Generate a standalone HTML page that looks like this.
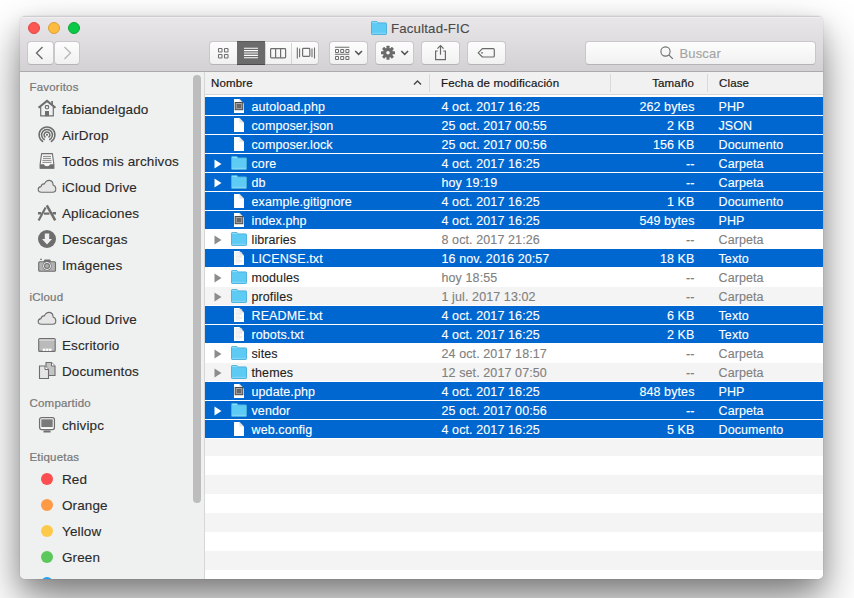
<!DOCTYPE html>
<html><head><meta charset="utf-8"><style>
html,body{margin:0;padding:0;}
body{width:854px;height:598px;overflow:hidden;background:#fff;position:relative;font-family:"Liberation Sans", sans-serif;}
.t{position:absolute;white-space:pre;font-family:"Liberation Sans", sans-serif;-webkit-text-stroke:0.12px currentColor;}
.ic{position:absolute;overflow:visible;}
.win{position:absolute;left:20px;top:16px;width:803px;height:563px;border-radius:5px;box-shadow:0 0 1px rgba(0,0,0,0.35),0 22px 45px rgba(0,0,0,0.45),0 8px 20px rgba(0,0,0,0.15);background:#fff;}
.clip{position:absolute;left:20px;top:16px;width:803px;height:563px;border-radius:5px;overflow:hidden;}
.toolbar{position:absolute;left:0;top:0;width:803px;height:55px;background:linear-gradient(#e9e7e9,#d3d1d3);border-bottom:1px solid #acaaac;box-shadow:inset 0 1px 0 #cfcdcf,inset 0 2px 0 rgba(255,255,255,0.35);}
.sidebar{position:absolute;left:0;top:56px;width:184px;height:507px;background:#eff0f0;border-right:1px solid #d6d6d6;}
.hdr{position:absolute;left:185px;top:56px;width:618px;height:22px;background:#f1f1f1;border-bottom:1px solid #d6d6d6;}
.row{position:absolute;left:205px;width:618px;}
.btn{position:absolute;box-sizing:border-box;background:linear-gradient(#fdfdfd,#f1f1f1);border:1px solid #c9c7c9;border-bottom-color:#b5b3b5;border-radius:4px;}
.seg{position:absolute;box-sizing:border-box;}
.tl{position:absolute;width:12px;height:12px;box-sizing:border-box;border-radius:50%;border:0.5px solid;}
.dot{position:absolute;width:12px;height:12px;border-radius:50%;}
.sb{position:absolute;left:193px;top:75px;width:8px;height:428px;border-radius:4px;background:#bdbdbd;}
</style></head><body>
<div class="win"></div>
<div class="clip">
 <div class="toolbar"></div>
 <div class="sidebar"></div>
 <div class="hdr"></div>
</div>
<div style="position:absolute;left:0;top:0;width:854px;height:598px;clip-path:inset(16px 31px 19px 20px round 5px);">
<div class="list">
<div class="row" style="top:97px;height:18px;background:#0067d0"></div>
<div class="row" style="top:116px;height:18px;background:#0067d0"></div>
<div class="row" style="top:135px;height:18px;background:#0067d0"></div>
<div class="row" style="top:154px;height:18px;background:#0067d0"></div>
<div class="row" style="top:173px;height:18px;background:#0067d0"></div>
<div class="row" style="top:192px;height:18px;background:#0067d0"></div>
<div class="row" style="top:211px;height:18px;background:#0067d0"></div>
<div class="row" style="top:230px;height:18px;background:#fff"></div>
<div class="row" style="top:249px;height:18px;background:#0067d0"></div>
<div class="row" style="top:268px;height:18px;background:#fff"></div>
<div class="row" style="top:287px;height:18px;background:#f4f4f4"></div>
<div class="row" style="top:306px;height:18px;background:#0067d0"></div>
<div class="row" style="top:325px;height:18px;background:#0067d0"></div>
<div class="row" style="top:344px;height:18px;background:#fff"></div>
<div class="row" style="top:363px;height:18px;background:#f4f4f4"></div>
<div class="row" style="top:382px;height:18px;background:#0067d0"></div>
<div class="row" style="top:401px;height:18px;background:#0067d0"></div>
<div class="row" style="top:420px;height:18px;background:#0067d0"></div>
<div class="row" style="top:439px;height:17px;background:#f4f4f4"></div>
<div class="row" style="top:456px;height:19px;background:#fff"></div>
<div class="row" style="top:475px;height:19px;background:#f4f4f4"></div>
<div class="row" style="top:494px;height:19px;background:#fff"></div>
<div class="row" style="top:513px;height:19px;background:#f4f4f4"></div>
<div class="row" style="top:532px;height:19px;background:#fff"></div>
<div class="row" style="top:551px;height:19px;background:#f4f4f4"></div>
<div class="row" style="top:570px;height:19px;background:#fff"></div>
</div>
<svg class="ic" style="left:234px;top:99px" width="10" height="14" viewBox="0 0 10 14"><path d="M0 0 H5.3 L10 4.7 V14 H0 Z" fill="#fff"/><path d="M5.3 0 V4.7 H10 Z" fill="#e9e9e9"/><path d="M5.3 0 L10 4.7" stroke="#c4c4c4" stroke-width="0.6"/><rect x="1.2" y="3.5" width="7.6" height="7.2" fill="#a8a8a8" stroke="#484848" stroke-width="1"/><rect x="2.7" y="5" width="4.6" height="4.3" fill="#666"/></svg>
<div class="t" style="left:251.5px;top:101.22px;font-size:12.5px;line-height:12.5px;color:#fff;font-weight:normal;letter-spacing:0.1px;">autoload.php</div>
<div class="t" style="left:441.5px;top:101.22px;font-size:12.5px;line-height:12.5px;color:#fff;font-weight:normal;letter-spacing:0.1px;">4 oct. 2017 16:25</div>
<div class="t" style="right:159.5px;top:101.22px;font-size:12.5px;line-height:12.5px;color:#fff;font-weight:normal;letter-spacing:0.1px;">262 bytes</div>
<div class="t" style="left:718.5px;top:101.22px;font-size:12.5px;line-height:12.5px;color:#fff;font-weight:normal;letter-spacing:0.1px;">PHP</div>
<svg class="ic" style="left:234px;top:118px" width="10" height="14" viewBox="0 0 10 14"><path d="M0 0 H5.3 L10 4.7 V14 H0 Z" fill="#fff"/><path d="M5.3 0 V4.7 H10 Z" fill="#e9e9e9"/><path d="M5.3 0 L10 4.7" stroke="#c4c4c4" stroke-width="0.6"/></svg>
<div class="t" style="left:251.5px;top:120.22px;font-size:12.5px;line-height:12.5px;color:#fff;font-weight:normal;letter-spacing:0.1px;">composer.json</div>
<div class="t" style="left:441.5px;top:120.22px;font-size:12.5px;line-height:12.5px;color:#fff;font-weight:normal;letter-spacing:0.1px;">25 oct. 2017 00:55</div>
<div class="t" style="right:159.5px;top:120.22px;font-size:12.5px;line-height:12.5px;color:#fff;font-weight:normal;letter-spacing:0.1px;">2 KB</div>
<div class="t" style="left:718.5px;top:120.22px;font-size:12.5px;line-height:12.5px;color:#fff;font-weight:normal;letter-spacing:0.1px;">JSON</div>
<svg class="ic" style="left:234px;top:137px" width="10" height="14" viewBox="0 0 10 14"><path d="M0 0 H5.3 L10 4.7 V14 H0 Z" fill="#fff"/><path d="M5.3 0 V4.7 H10 Z" fill="#e9e9e9"/><path d="M5.3 0 L10 4.7" stroke="#c4c4c4" stroke-width="0.6"/></svg>
<div class="t" style="left:251.5px;top:139.22px;font-size:12.5px;line-height:12.5px;color:#fff;font-weight:normal;letter-spacing:0.1px;">composer.lock</div>
<div class="t" style="left:441.5px;top:139.22px;font-size:12.5px;line-height:12.5px;color:#fff;font-weight:normal;letter-spacing:0.1px;">25 oct. 2017 00:56</div>
<div class="t" style="right:159.5px;top:139.22px;font-size:12.5px;line-height:12.5px;color:#fff;font-weight:normal;letter-spacing:0.1px;">156 KB</div>
<div class="t" style="left:718.5px;top:139.22px;font-size:12.5px;line-height:12.5px;color:#fff;font-weight:normal;letter-spacing:0.1px;">Documento</div>
<svg class="ic" style="left:214px;top:159px" width="8" height="10" viewBox="0 0 8 10"><path d="M0.5 0.5 L7.5 5 L0.5 9.5 Z" fill="#fff"/></svg>
<svg class="ic" style="left:231px;top:156px" width="16" height="14" viewBox="0 0 16 14"><path d="M0.5 1.3 Q0.5 0.5 1.3 0.5 H6 L7.1 1.9 H14.8 Q15.5 1.9 15.5 2.6 V12.8 Q15.5 13.5 14.8 13.5 H1.2 Q0.5 13.5 0.5 12.8 Z" fill="#5ecbf4" stroke="#47afdd" stroke-width="0.9"/><line x1="1.3" x2="6" y1="1.4" y2="1.4" stroke="#a0e2f9" stroke-width="0.8"/><line x1="1.2" x2="14.8" y1="12.3" y2="12.3" stroke="#8fdaf7" stroke-width="0.9"/></svg>
<div class="t" style="left:251.5px;top:158.22px;font-size:12.5px;line-height:12.5px;color:#fff;font-weight:normal;letter-spacing:0.1px;">core</div>
<div class="t" style="left:441.5px;top:158.22px;font-size:12.5px;line-height:12.5px;color:#fff;font-weight:normal;letter-spacing:0.1px;">4 oct. 2017 16:25</div>
<div class="t" style="right:159.5px;top:158.22px;font-size:12.5px;line-height:12.5px;color:#fff;font-weight:normal;letter-spacing:0.1px;">--</div>
<div class="t" style="left:718.5px;top:158.22px;font-size:12.5px;line-height:12.5px;color:#fff;font-weight:normal;letter-spacing:0.1px;">Carpeta</div>
<svg class="ic" style="left:214px;top:178px" width="8" height="10" viewBox="0 0 8 10"><path d="M0.5 0.5 L7.5 5 L0.5 9.5 Z" fill="#fff"/></svg>
<svg class="ic" style="left:231px;top:175px" width="16" height="14" viewBox="0 0 16 14"><path d="M0.5 1.3 Q0.5 0.5 1.3 0.5 H6 L7.1 1.9 H14.8 Q15.5 1.9 15.5 2.6 V12.8 Q15.5 13.5 14.8 13.5 H1.2 Q0.5 13.5 0.5 12.8 Z" fill="#5ecbf4" stroke="#47afdd" stroke-width="0.9"/><line x1="1.3" x2="6" y1="1.4" y2="1.4" stroke="#a0e2f9" stroke-width="0.8"/><line x1="1.2" x2="14.8" y1="12.3" y2="12.3" stroke="#8fdaf7" stroke-width="0.9"/></svg>
<div class="t" style="left:251.5px;top:177.22px;font-size:12.5px;line-height:12.5px;color:#fff;font-weight:normal;letter-spacing:0.1px;">db</div>
<div class="t" style="left:441.5px;top:177.22px;font-size:12.5px;line-height:12.5px;color:#fff;font-weight:normal;letter-spacing:0.1px;">hoy 19:19</div>
<div class="t" style="right:159.5px;top:177.22px;font-size:12.5px;line-height:12.5px;color:#fff;font-weight:normal;letter-spacing:0.1px;">--</div>
<div class="t" style="left:718.5px;top:177.22px;font-size:12.5px;line-height:12.5px;color:#fff;font-weight:normal;letter-spacing:0.1px;">Carpeta</div>
<svg class="ic" style="left:234px;top:194px" width="10" height="14" viewBox="0 0 10 14"><path d="M0 0 H5.3 L10 4.7 V14 H0 Z" fill="#fff"/><path d="M5.3 0 V4.7 H10 Z" fill="#e9e9e9"/><path d="M5.3 0 L10 4.7" stroke="#c4c4c4" stroke-width="0.6"/></svg>
<div class="t" style="left:251.5px;top:196.22px;font-size:12.5px;line-height:12.5px;color:#fff;font-weight:normal;letter-spacing:0.1px;">example.gitignore</div>
<div class="t" style="left:441.5px;top:196.22px;font-size:12.5px;line-height:12.5px;color:#fff;font-weight:normal;letter-spacing:0.1px;">4 oct. 2017 16:25</div>
<div class="t" style="right:159.5px;top:196.22px;font-size:12.5px;line-height:12.5px;color:#fff;font-weight:normal;letter-spacing:0.1px;">1 KB</div>
<div class="t" style="left:718.5px;top:196.22px;font-size:12.5px;line-height:12.5px;color:#fff;font-weight:normal;letter-spacing:0.1px;">Documento</div>
<svg class="ic" style="left:234px;top:213px" width="10" height="14" viewBox="0 0 10 14"><path d="M0 0 H5.3 L10 4.7 V14 H0 Z" fill="#fff"/><path d="M5.3 0 V4.7 H10 Z" fill="#e9e9e9"/><path d="M5.3 0 L10 4.7" stroke="#c4c4c4" stroke-width="0.6"/><rect x="1.2" y="3.5" width="7.6" height="7.2" fill="#a8a8a8" stroke="#484848" stroke-width="1"/><rect x="2.7" y="5" width="4.6" height="4.3" fill="#666"/></svg>
<div class="t" style="left:251.5px;top:215.22px;font-size:12.5px;line-height:12.5px;color:#fff;font-weight:normal;letter-spacing:0.1px;">index.php</div>
<div class="t" style="left:441.5px;top:215.22px;font-size:12.5px;line-height:12.5px;color:#fff;font-weight:normal;letter-spacing:0.1px;">4 oct. 2017 16:25</div>
<div class="t" style="right:159.5px;top:215.22px;font-size:12.5px;line-height:12.5px;color:#fff;font-weight:normal;letter-spacing:0.1px;">549 bytes</div>
<div class="t" style="left:718.5px;top:215.22px;font-size:12.5px;line-height:12.5px;color:#fff;font-weight:normal;letter-spacing:0.1px;">PHP</div>
<svg class="ic" style="left:214px;top:235px" width="8" height="10" viewBox="0 0 8 10"><path d="M0.5 0.5 L7.5 5 L0.5 9.5 Z" fill="#8c8c8c"/></svg>
<svg class="ic" style="left:231px;top:232px" width="16" height="14" viewBox="0 0 16 14"><path d="M0.5 1.3 Q0.5 0.5 1.3 0.5 H6 L7.1 1.9 H14.8 Q15.5 1.9 15.5 2.6 V12.8 Q15.5 13.5 14.8 13.5 H1.2 Q0.5 13.5 0.5 12.8 Z" fill="#5ecbf4" stroke="#47afdd" stroke-width="0.9"/><line x1="1.3" x2="6" y1="1.4" y2="1.4" stroke="#a0e2f9" stroke-width="0.8"/><line x1="1.2" x2="14.8" y1="12.3" y2="12.3" stroke="#8fdaf7" stroke-width="0.9"/></svg>
<div class="t" style="left:251.5px;top:234.22px;font-size:12.5px;line-height:12.5px;color:#1e1e1e;font-weight:normal;letter-spacing:0.1px;">libraries</div>
<div class="t" style="left:441.5px;top:234.22px;font-size:12.5px;line-height:12.5px;color:#808080;font-weight:normal;letter-spacing:0.1px;">8 oct. 2017 21:26</div>
<div class="t" style="right:159.5px;top:234.22px;font-size:12.5px;line-height:12.5px;color:#808080;font-weight:normal;letter-spacing:0.1px;">--</div>
<div class="t" style="left:718.5px;top:234.22px;font-size:12.5px;line-height:12.5px;color:#808080;font-weight:normal;letter-spacing:0.1px;">Carpeta</div>
<svg class="ic" style="left:234px;top:251px" width="10" height="14" viewBox="0 0 10 14"><path d="M0 0 H5.3 L10 4.7 V14 H0 Z" fill="#fff"/><line x1="1.4" x2="8.2" y1="1.60" y2="1.60" stroke="#e3e3e3" stroke-width="0.7"/><line x1="1.4" x2="8.2" y1="2.90" y2="2.90" stroke="#e3e3e3" stroke-width="0.7"/><line x1="1.4" x2="6" y1="4.20" y2="4.20" stroke="#e3e3e3" stroke-width="0.7"/><line x1="1.4" x2="8.2" y1="5.50" y2="5.50" stroke="#e3e3e3" stroke-width="0.7"/><line x1="1.4" x2="8.2" y1="6.80" y2="6.80" stroke="#e3e3e3" stroke-width="0.7"/><line x1="1.4" x2="6" y1="8.10" y2="8.10" stroke="#e3e3e3" stroke-width="0.7"/><line x1="1.4" x2="8.2" y1="9.40" y2="9.40" stroke="#e3e3e3" stroke-width="0.7"/><line x1="1.4" x2="8.2" y1="10.70" y2="10.70" stroke="#e3e3e3" stroke-width="0.7"/><line x1="1.4" x2="6" y1="12.00" y2="12.00" stroke="#e3e3e3" stroke-width="0.7"/><path d="M5.3 0 V4.7 H10 Z" fill="#e9e9e9"/><path d="M5.3 0 L10 4.7" stroke="#c4c4c4" stroke-width="0.6"/></svg>
<div class="t" style="left:251.5px;top:253.22px;font-size:12.5px;line-height:12.5px;color:#fff;font-weight:normal;letter-spacing:0.1px;">LICENSE.txt</div>
<div class="t" style="left:441.5px;top:253.22px;font-size:12.5px;line-height:12.5px;color:#fff;font-weight:normal;letter-spacing:0.1px;">16 nov. 2016 20:57</div>
<div class="t" style="right:159.5px;top:253.22px;font-size:12.5px;line-height:12.5px;color:#fff;font-weight:normal;letter-spacing:0.1px;">18 KB</div>
<div class="t" style="left:718.5px;top:253.22px;font-size:12.5px;line-height:12.5px;color:#fff;font-weight:normal;letter-spacing:0.1px;">Texto</div>
<svg class="ic" style="left:214px;top:273px" width="8" height="10" viewBox="0 0 8 10"><path d="M0.5 0.5 L7.5 5 L0.5 9.5 Z" fill="#8c8c8c"/></svg>
<svg class="ic" style="left:231px;top:270px" width="16" height="14" viewBox="0 0 16 14"><path d="M0.5 1.3 Q0.5 0.5 1.3 0.5 H6 L7.1 1.9 H14.8 Q15.5 1.9 15.5 2.6 V12.8 Q15.5 13.5 14.8 13.5 H1.2 Q0.5 13.5 0.5 12.8 Z" fill="#5ecbf4" stroke="#47afdd" stroke-width="0.9"/><line x1="1.3" x2="6" y1="1.4" y2="1.4" stroke="#a0e2f9" stroke-width="0.8"/><line x1="1.2" x2="14.8" y1="12.3" y2="12.3" stroke="#8fdaf7" stroke-width="0.9"/></svg>
<div class="t" style="left:251.5px;top:272.22px;font-size:12.5px;line-height:12.5px;color:#1e1e1e;font-weight:normal;letter-spacing:0.1px;">modules</div>
<div class="t" style="left:441.5px;top:272.22px;font-size:12.5px;line-height:12.5px;color:#808080;font-weight:normal;letter-spacing:0.1px;">hoy 18:55</div>
<div class="t" style="right:159.5px;top:272.22px;font-size:12.5px;line-height:12.5px;color:#808080;font-weight:normal;letter-spacing:0.1px;">--</div>
<div class="t" style="left:718.5px;top:272.22px;font-size:12.5px;line-height:12.5px;color:#808080;font-weight:normal;letter-spacing:0.1px;">Carpeta</div>
<svg class="ic" style="left:214px;top:292px" width="8" height="10" viewBox="0 0 8 10"><path d="M0.5 0.5 L7.5 5 L0.5 9.5 Z" fill="#8c8c8c"/></svg>
<svg class="ic" style="left:231px;top:289px" width="16" height="14" viewBox="0 0 16 14"><path d="M0.5 1.3 Q0.5 0.5 1.3 0.5 H6 L7.1 1.9 H14.8 Q15.5 1.9 15.5 2.6 V12.8 Q15.5 13.5 14.8 13.5 H1.2 Q0.5 13.5 0.5 12.8 Z" fill="#5ecbf4" stroke="#47afdd" stroke-width="0.9"/><line x1="1.3" x2="6" y1="1.4" y2="1.4" stroke="#a0e2f9" stroke-width="0.8"/><line x1="1.2" x2="14.8" y1="12.3" y2="12.3" stroke="#8fdaf7" stroke-width="0.9"/></svg>
<div class="t" style="left:251.5px;top:291.22px;font-size:12.5px;line-height:12.5px;color:#1e1e1e;font-weight:normal;letter-spacing:0.1px;">profiles</div>
<div class="t" style="left:441.5px;top:291.22px;font-size:12.5px;line-height:12.5px;color:#808080;font-weight:normal;letter-spacing:0.1px;">1 jul. 2017 13:02</div>
<div class="t" style="right:159.5px;top:291.22px;font-size:12.5px;line-height:12.5px;color:#808080;font-weight:normal;letter-spacing:0.1px;">--</div>
<div class="t" style="left:718.5px;top:291.22px;font-size:12.5px;line-height:12.5px;color:#808080;font-weight:normal;letter-spacing:0.1px;">Carpeta</div>
<svg class="ic" style="left:234px;top:308px" width="10" height="14" viewBox="0 0 10 14"><path d="M0 0 H5.3 L10 4.7 V14 H0 Z" fill="#fff"/><line x1="1.4" x2="8.2" y1="1.60" y2="1.60" stroke="#e3e3e3" stroke-width="0.7"/><line x1="1.4" x2="8.2" y1="2.90" y2="2.90" stroke="#e3e3e3" stroke-width="0.7"/><line x1="1.4" x2="6" y1="4.20" y2="4.20" stroke="#e3e3e3" stroke-width="0.7"/><line x1="1.4" x2="8.2" y1="5.50" y2="5.50" stroke="#e3e3e3" stroke-width="0.7"/><line x1="1.4" x2="8.2" y1="6.80" y2="6.80" stroke="#e3e3e3" stroke-width="0.7"/><line x1="1.4" x2="6" y1="8.10" y2="8.10" stroke="#e3e3e3" stroke-width="0.7"/><line x1="1.4" x2="8.2" y1="9.40" y2="9.40" stroke="#e3e3e3" stroke-width="0.7"/><line x1="1.4" x2="8.2" y1="10.70" y2="10.70" stroke="#e3e3e3" stroke-width="0.7"/><line x1="1.4" x2="6" y1="12.00" y2="12.00" stroke="#e3e3e3" stroke-width="0.7"/><path d="M5.3 0 V4.7 H10 Z" fill="#e9e9e9"/><path d="M5.3 0 L10 4.7" stroke="#c4c4c4" stroke-width="0.6"/></svg>
<div class="t" style="left:251.5px;top:310.22px;font-size:12.5px;line-height:12.5px;color:#fff;font-weight:normal;letter-spacing:0.1px;">README.txt</div>
<div class="t" style="left:441.5px;top:310.22px;font-size:12.5px;line-height:12.5px;color:#fff;font-weight:normal;letter-spacing:0.1px;">4 oct. 2017 16:25</div>
<div class="t" style="right:159.5px;top:310.22px;font-size:12.5px;line-height:12.5px;color:#fff;font-weight:normal;letter-spacing:0.1px;">6 KB</div>
<div class="t" style="left:718.5px;top:310.22px;font-size:12.5px;line-height:12.5px;color:#fff;font-weight:normal;letter-spacing:0.1px;">Texto</div>
<svg class="ic" style="left:234px;top:327px" width="10" height="14" viewBox="0 0 10 14"><path d="M0 0 H5.3 L10 4.7 V14 H0 Z" fill="#fff"/><line x1="1.4" x2="8.2" y1="1.60" y2="1.60" stroke="#e3e3e3" stroke-width="0.7"/><line x1="1.4" x2="8.2" y1="2.90" y2="2.90" stroke="#e3e3e3" stroke-width="0.7"/><line x1="1.4" x2="6" y1="4.20" y2="4.20" stroke="#e3e3e3" stroke-width="0.7"/><line x1="1.4" x2="8.2" y1="5.50" y2="5.50" stroke="#e3e3e3" stroke-width="0.7"/><line x1="1.4" x2="8.2" y1="6.80" y2="6.80" stroke="#e3e3e3" stroke-width="0.7"/><line x1="1.4" x2="6" y1="8.10" y2="8.10" stroke="#e3e3e3" stroke-width="0.7"/><line x1="1.4" x2="8.2" y1="9.40" y2="9.40" stroke="#e3e3e3" stroke-width="0.7"/><line x1="1.4" x2="8.2" y1="10.70" y2="10.70" stroke="#e3e3e3" stroke-width="0.7"/><line x1="1.4" x2="6" y1="12.00" y2="12.00" stroke="#e3e3e3" stroke-width="0.7"/><path d="M5.3 0 V4.7 H10 Z" fill="#e9e9e9"/><path d="M5.3 0 L10 4.7" stroke="#c4c4c4" stroke-width="0.6"/></svg>
<div class="t" style="left:251.5px;top:329.22px;font-size:12.5px;line-height:12.5px;color:#fff;font-weight:normal;letter-spacing:0.1px;">robots.txt</div>
<div class="t" style="left:441.5px;top:329.22px;font-size:12.5px;line-height:12.5px;color:#fff;font-weight:normal;letter-spacing:0.1px;">4 oct. 2017 16:25</div>
<div class="t" style="right:159.5px;top:329.22px;font-size:12.5px;line-height:12.5px;color:#fff;font-weight:normal;letter-spacing:0.1px;">2 KB</div>
<div class="t" style="left:718.5px;top:329.22px;font-size:12.5px;line-height:12.5px;color:#fff;font-weight:normal;letter-spacing:0.1px;">Texto</div>
<svg class="ic" style="left:214px;top:349px" width="8" height="10" viewBox="0 0 8 10"><path d="M0.5 0.5 L7.5 5 L0.5 9.5 Z" fill="#8c8c8c"/></svg>
<svg class="ic" style="left:231px;top:346px" width="16" height="14" viewBox="0 0 16 14"><path d="M0.5 1.3 Q0.5 0.5 1.3 0.5 H6 L7.1 1.9 H14.8 Q15.5 1.9 15.5 2.6 V12.8 Q15.5 13.5 14.8 13.5 H1.2 Q0.5 13.5 0.5 12.8 Z" fill="#5ecbf4" stroke="#47afdd" stroke-width="0.9"/><line x1="1.3" x2="6" y1="1.4" y2="1.4" stroke="#a0e2f9" stroke-width="0.8"/><line x1="1.2" x2="14.8" y1="12.3" y2="12.3" stroke="#8fdaf7" stroke-width="0.9"/></svg>
<div class="t" style="left:251.5px;top:348.22px;font-size:12.5px;line-height:12.5px;color:#1e1e1e;font-weight:normal;letter-spacing:0.1px;">sites</div>
<div class="t" style="left:441.5px;top:348.22px;font-size:12.5px;line-height:12.5px;color:#808080;font-weight:normal;letter-spacing:0.1px;">24 oct. 2017 18:17</div>
<div class="t" style="right:159.5px;top:348.22px;font-size:12.5px;line-height:12.5px;color:#808080;font-weight:normal;letter-spacing:0.1px;">--</div>
<div class="t" style="left:718.5px;top:348.22px;font-size:12.5px;line-height:12.5px;color:#808080;font-weight:normal;letter-spacing:0.1px;">Carpeta</div>
<svg class="ic" style="left:214px;top:368px" width="8" height="10" viewBox="0 0 8 10"><path d="M0.5 0.5 L7.5 5 L0.5 9.5 Z" fill="#8c8c8c"/></svg>
<svg class="ic" style="left:231px;top:365px" width="16" height="14" viewBox="0 0 16 14"><path d="M0.5 1.3 Q0.5 0.5 1.3 0.5 H6 L7.1 1.9 H14.8 Q15.5 1.9 15.5 2.6 V12.8 Q15.5 13.5 14.8 13.5 H1.2 Q0.5 13.5 0.5 12.8 Z" fill="#5ecbf4" stroke="#47afdd" stroke-width="0.9"/><line x1="1.3" x2="6" y1="1.4" y2="1.4" stroke="#a0e2f9" stroke-width="0.8"/><line x1="1.2" x2="14.8" y1="12.3" y2="12.3" stroke="#8fdaf7" stroke-width="0.9"/></svg>
<div class="t" style="left:251.5px;top:367.22px;font-size:12.5px;line-height:12.5px;color:#1e1e1e;font-weight:normal;letter-spacing:0.1px;">themes</div>
<div class="t" style="left:441.5px;top:367.22px;font-size:12.5px;line-height:12.5px;color:#808080;font-weight:normal;letter-spacing:0.1px;">12 set. 2017 07:50</div>
<div class="t" style="right:159.5px;top:367.22px;font-size:12.5px;line-height:12.5px;color:#808080;font-weight:normal;letter-spacing:0.1px;">--</div>
<div class="t" style="left:718.5px;top:367.22px;font-size:12.5px;line-height:12.5px;color:#808080;font-weight:normal;letter-spacing:0.1px;">Carpeta</div>
<svg class="ic" style="left:234px;top:384px" width="10" height="14" viewBox="0 0 10 14"><path d="M0 0 H5.3 L10 4.7 V14 H0 Z" fill="#fff"/><path d="M5.3 0 V4.7 H10 Z" fill="#e9e9e9"/><path d="M5.3 0 L10 4.7" stroke="#c4c4c4" stroke-width="0.6"/><rect x="1.2" y="3.5" width="7.6" height="7.2" fill="#a8a8a8" stroke="#484848" stroke-width="1"/><rect x="2.7" y="5" width="4.6" height="4.3" fill="#666"/></svg>
<div class="t" style="left:251.5px;top:386.22px;font-size:12.5px;line-height:12.5px;color:#fff;font-weight:normal;letter-spacing:0.1px;">update.php</div>
<div class="t" style="left:441.5px;top:386.22px;font-size:12.5px;line-height:12.5px;color:#fff;font-weight:normal;letter-spacing:0.1px;">4 oct. 2017 16:25</div>
<div class="t" style="right:159.5px;top:386.22px;font-size:12.5px;line-height:12.5px;color:#fff;font-weight:normal;letter-spacing:0.1px;">848 bytes</div>
<div class="t" style="left:718.5px;top:386.22px;font-size:12.5px;line-height:12.5px;color:#fff;font-weight:normal;letter-spacing:0.1px;">PHP</div>
<svg class="ic" style="left:214px;top:406px" width="8" height="10" viewBox="0 0 8 10"><path d="M0.5 0.5 L7.5 5 L0.5 9.5 Z" fill="#fff"/></svg>
<svg class="ic" style="left:231px;top:403px" width="16" height="14" viewBox="0 0 16 14"><path d="M0.5 1.3 Q0.5 0.5 1.3 0.5 H6 L7.1 1.9 H14.8 Q15.5 1.9 15.5 2.6 V12.8 Q15.5 13.5 14.8 13.5 H1.2 Q0.5 13.5 0.5 12.8 Z" fill="#5ecbf4" stroke="#47afdd" stroke-width="0.9"/><line x1="1.3" x2="6" y1="1.4" y2="1.4" stroke="#a0e2f9" stroke-width="0.8"/><line x1="1.2" x2="14.8" y1="12.3" y2="12.3" stroke="#8fdaf7" stroke-width="0.9"/></svg>
<div class="t" style="left:251.5px;top:405.22px;font-size:12.5px;line-height:12.5px;color:#fff;font-weight:normal;letter-spacing:0.1px;">vendor</div>
<div class="t" style="left:441.5px;top:405.22px;font-size:12.5px;line-height:12.5px;color:#fff;font-weight:normal;letter-spacing:0.1px;">25 oct. 2017 00:56</div>
<div class="t" style="right:159.5px;top:405.22px;font-size:12.5px;line-height:12.5px;color:#fff;font-weight:normal;letter-spacing:0.1px;">--</div>
<div class="t" style="left:718.5px;top:405.22px;font-size:12.5px;line-height:12.5px;color:#fff;font-weight:normal;letter-spacing:0.1px;">Carpeta</div>
<svg class="ic" style="left:234px;top:422px" width="10" height="14" viewBox="0 0 10 14"><path d="M0 0 H5.3 L10 4.7 V14 H0 Z" fill="#fff"/><path d="M5.3 0 V4.7 H10 Z" fill="#e9e9e9"/><path d="M5.3 0 L10 4.7" stroke="#c4c4c4" stroke-width="0.6"/></svg>
<div class="t" style="left:251.5px;top:424.22px;font-size:12.5px;line-height:12.5px;color:#fff;font-weight:normal;letter-spacing:0.1px;">web.config</div>
<div class="t" style="left:441.5px;top:424.22px;font-size:12.5px;line-height:12.5px;color:#fff;font-weight:normal;letter-spacing:0.1px;">4 oct. 2017 16:25</div>
<div class="t" style="right:159.5px;top:424.22px;font-size:12.5px;line-height:12.5px;color:#fff;font-weight:normal;letter-spacing:0.1px;">5 KB</div>
<div class="t" style="left:718.5px;top:424.22px;font-size:12.5px;line-height:12.5px;color:#fff;font-weight:normal;letter-spacing:0.1px;">Documento</div>
<div class="t" style="left:29.5px;top:82.07px;font-size:11.5px;line-height:11.5px;color:#787878;font-weight:normal;letter-spacing:0.2px;-webkit-text-stroke:0.22px #787878;">Favoritos</div>
<div class="t" style="left:62px;top:102.57px;font-size:13.5px;line-height:13.5px;color:#2a2a2a;font-weight:normal;letter-spacing:0.12px;">fabiandelgado</div>
<div class="t" style="left:62px;top:128.57px;font-size:13.5px;line-height:13.5px;color:#2a2a2a;font-weight:normal;letter-spacing:0.12px;">AirDrop</div>
<div class="t" style="left:62px;top:154.57px;font-size:13.5px;line-height:13.5px;color:#2a2a2a;font-weight:normal;letter-spacing:0.12px;">Todos mis archivos</div>
<div class="t" style="left:62px;top:180.57px;font-size:13.5px;line-height:13.5px;color:#2a2a2a;font-weight:normal;letter-spacing:0.12px;">iCloud Drive</div>
<div class="t" style="left:62px;top:206.57px;font-size:13.5px;line-height:13.5px;color:#2a2a2a;font-weight:normal;letter-spacing:0.12px;">Aplicaciones</div>
<div class="t" style="left:62px;top:232.57px;font-size:13.5px;line-height:13.5px;color:#2a2a2a;font-weight:normal;letter-spacing:0.12px;">Descargas</div>
<div class="t" style="left:62px;top:258.57px;font-size:13.5px;line-height:13.5px;color:#2a2a2a;font-weight:normal;letter-spacing:0.12px;">Imágenes</div>
<div class="t" style="left:29.5px;top:292.07px;font-size:11.5px;line-height:11.5px;color:#787878;font-weight:normal;letter-spacing:0.2px;-webkit-text-stroke:0.22px #787878;">iCloud</div>
<div class="t" style="left:62px;top:312.57px;font-size:13.5px;line-height:13.5px;color:#2a2a2a;font-weight:normal;letter-spacing:0.12px;">iCloud Drive</div>
<div class="t" style="left:62px;top:338.57px;font-size:13.5px;line-height:13.5px;color:#2a2a2a;font-weight:normal;letter-spacing:0.12px;">Escritorio</div>
<div class="t" style="left:62px;top:364.57px;font-size:13.5px;line-height:13.5px;color:#2a2a2a;font-weight:normal;letter-spacing:0.12px;">Documentos</div>
<div class="t" style="left:29.5px;top:398.07px;font-size:11.5px;line-height:11.5px;color:#787878;font-weight:normal;letter-spacing:0.2px;-webkit-text-stroke:0.22px #787878;">Compartido</div>
<div class="t" style="left:62px;top:418.57px;font-size:13.5px;line-height:13.5px;color:#2a2a2a;font-weight:normal;letter-spacing:0.12px;">chivipc</div>
<div class="t" style="left:29.5px;top:452.07px;font-size:11.5px;line-height:11.5px;color:#787878;font-weight:normal;letter-spacing:0.2px;-webkit-text-stroke:0.22px #787878;">Etiquetas</div>
<div class="t" style="left:62px;top:472.57px;font-size:13.5px;line-height:13.5px;color:#2a2a2a;font-weight:normal;letter-spacing:0.12px;">Red</div>
<div class="dot" style="left:41px;top:473px;background:#fc4d50"></div>
<div class="t" style="left:62px;top:498.57px;font-size:13.5px;line-height:13.5px;color:#2a2a2a;font-weight:normal;letter-spacing:0.12px;">Orange</div>
<div class="dot" style="left:41px;top:499px;background:#fd9a43"></div>
<div class="t" style="left:62px;top:524.57px;font-size:13.5px;line-height:13.5px;color:#2a2a2a;font-weight:normal;letter-spacing:0.12px;">Yellow</div>
<div class="dot" style="left:41px;top:525px;background:#fdc94b"></div>
<div class="t" style="left:62px;top:550.57px;font-size:13.5px;line-height:13.5px;color:#2a2a2a;font-weight:normal;letter-spacing:0.12px;">Green</div>
<div class="dot" style="left:41px;top:551px;background:#5ac85a"></div>
<div class="t" style="left:62px;top:576.57px;font-size:13.5px;line-height:13.5px;color:#2a2a2a;font-weight:normal;letter-spacing:0.12px;">Blue</div>
<div class="dot" style="left:41px;top:577px;background:#1aa3f7"></div>

<svg class="ic" style="left:36px;top:98px" width="22" height="22" viewBox="0 0 22 22">
 <path d="M2.5 9.7 L11 2.9 L19.5 9.7" fill="none" stroke="#6e6e6e" stroke-width="2.1" stroke-linejoin="miter"/>
 <path d="M16.1 3.1 V7" stroke="#6e6e6e" stroke-width="1.7"/>
 <path d="M4.7 8.4 V17.9 H17.3 V8.4" fill="none" stroke="#6e6e6e" stroke-width="1.2"/>
 <rect x="9.4" y="7.6" width="3.2" height="3.1" rx="0.9" fill="none" stroke="#6e6e6e" stroke-width="1.1"/>
 <rect x="9" y="13" width="4" height="5.2" fill="#6e6e6e"/>
</svg>
<svg class="ic" style="left:36px;top:124px" width="22" height="22" viewBox="0 0 22 22">
 <g fill="none" stroke="#6e6e6e" stroke-width="1.5">
 <path d="M7.17 17.76 A7.9 7.9 0 1 1 14.83 17.76"/>
 <path d="M8.8 15.78 A5.4 5.4 0 1 1 13.2 15.78"/>
 <path d="M9.51 13.34 A2.9 2.9 0 1 1 12.49 13.34"/>
 </g>
 <circle cx="11" cy="10.85" r="1.05" fill="#6e6e6e"/>
</svg>
<svg class="ic" style="left:36px;top:150px" width="22" height="22" viewBox="0 0 22 22">
 <path d="M5.6 3.6 H16.4 L17.9 14.5 V18.3 H4.1 V14.5 Z" fill="#f6f6f6" stroke="#6e6e6e" stroke-width="1.1" stroke-linejoin="round"/>
 <g stroke="#6e6e6e" stroke-width="0.8"><line x1="7" x2="15" y1="6.4" y2="6.4"/><line x1="7" x2="15" y1="8.4" y2="8.4"/><line x1="6.4" x2="15.5" y1="10.4" y2="10.4"/><line x1="6.4" x2="15.5" y1="12.4" y2="12.4"/></g>
 <path d="M4.1 14.2 H7.9 Q8.4 16.2 11 16.2 Q13.6 16.2 14.1 14.2 H17.9 V18.5 H4.1 Z" fill="#6e6e6e"/>
</svg>
<svg class="ic" style="left:37px;top:179px" width="20" height="15" viewBox="0 0 20 15">
 <path d="M4.5 13.3 Q1.2 13.3 1.2 10.5 Q1.2 7.8 4 7.6 Q4.6 4.6 7.4 4.9 Q9 1.2 12.5 1.4 Q16 1.8 16.1 6 Q18.8 6.8 18.8 10 Q18.8 13.3 15.5 13.3 Z" fill="#e6e6e6" stroke="#6e6e6e" stroke-width="1.1"/>
</svg>
<svg class="ic" style="left:36px;top:202px" width="22" height="22" viewBox="0 0 22 22">
 <path d="M9.6 5.6 L2.6 18.6" stroke="#6e6e6e" stroke-width="2.1"/>
 <path d="M10.8 3.4 L19.2 18.3" stroke="#6e6e6e" stroke-width="2.5"/>
 <g fill="#6e6e6e"><rect x="2" y="10" width="3.2" height="2.5"/><rect x="8" y="10.5" width="5.4" height="2.2"/><rect x="16.6" y="10" width="3.4" height="2.5"/></g>
</svg>
<svg class="ic" style="left:37px;top:229px" width="20" height="20" viewBox="0 0 20 20">
 <circle cx="10" cy="10" r="9" fill="#6e6e6e"/>
 <path d="M7.8 4.5 H12.2 V10 H15 L10 15.5 L5 10 H7.8 Z" fill="#f0f0f0"/>
</svg>
<svg class="ic" style="left:36px;top:254px" width="22" height="22" viewBox="0 0 22 22">
 <path d="M7.2 7.8 L8.6 5.5 H14 L15.4 7.8 Z" fill="#6e6e6e"/>
 <rect x="2.7" y="7.7" width="16.8" height="9.6" rx="1" fill="#b2b2b2" stroke="#6e6e6e" stroke-width="1.1"/>
 <rect x="4" y="4.8" width="2" height="1" fill="#6e6e6e"/>
 <circle cx="11" cy="12" r="4.5" fill="#6e6e6e"/>
 <circle cx="11" cy="12" r="3.5" fill="none" stroke="#f4f4f4" stroke-width="1"/>
 <circle cx="11" cy="12" r="2.4" fill="#b0b0b0" stroke="#6e6e6e" stroke-width="0.9"/>
</svg>
<svg class="ic" style="left:37px;top:311px" width="20" height="15" viewBox="0 0 20 15">
 <path d="M4.5 13.3 Q1.2 13.3 1.2 10.5 Q1.2 7.8 4 7.6 Q4.6 4.6 7.4 4.9 Q9 1.2 12.5 1.4 Q16 1.8 16.1 6 Q18.8 6.8 18.8 10 Q18.8 13.3 15.5 13.3 Z" fill="#e6e6e6" stroke="#6e6e6e" stroke-width="1.1"/>
</svg>
<svg class="ic" style="left:37px;top:337px" width="20" height="16" viewBox="0 0 20 16">
 <rect x="1.7" y="1.6" width="16.5" height="12.8" rx="1" fill="#bababa" stroke="#6e6e6e" stroke-width="1.1"/>
 <line x1="2.3" x2="17.6" y1="3" y2="3" stroke="#f0f0f0" stroke-width="0.9"/>
 <rect x="5.7" y="11.6" width="2.6" height="2.3" fill="#fff"/><rect x="8.8" y="11.6" width="2.6" height="2.3" fill="#fff"/><rect x="11.9" y="11.6" width="2.6" height="2.3" fill="#fff"/>
</svg>
<svg class="ic" style="left:38px;top:361px" width="18" height="19" viewBox="0 0 18 19">
 <path d="M8 1.5 H13.5 L17 5 V14.5 H8 Z" fill="#c4c4c4" stroke="#6e6e6e" stroke-width="1.1"/>
 <path d="M1.5 5 H7 L10.5 8.5 V17.5 H1.5 Z" fill="#e6e6e6" stroke="#6e6e6e" stroke-width="1.1"/>
 <path d="M7 5 V8.5 H10.5" fill="#fff" stroke="#6e6e6e" stroke-width="1"/>
 <path d="M13.5 1.5 V5 H17" fill="#fff" stroke="#6e6e6e" stroke-width="1"/>
</svg>
<svg class="ic" style="left:38px;top:416px" width="18" height="18" viewBox="0 0 18 18">
 <rect x="1.6" y="1.6" width="14.8" height="12" rx="2" fill="#fff" stroke="#6e6e6e" stroke-width="1.3"/>
 <rect x="3.3" y="3.3" width="11.4" height="7.8" fill="#7a7a7a"/>
 <rect x="5.5" y="14.5" width="7" height="2" fill="#6e6e6e"/>
</svg>

<div class="sb"></div>

<div class="t" style="left:211px;top:78.27px;font-size:11.5px;line-height:11.5px;color:#181818;font-weight:normal;letter-spacing:0.15px;-webkit-text-stroke:0.2px #181818;">Nombre</div>
<svg class="ic" style="left:413px;top:79px" width="9" height="7" viewBox="0 0 9 7">
 <path d="M1 5.5 L4.5 2 L8 5.5" fill="none" stroke="#444" stroke-width="1.4"/>
</svg>
<div style="position:absolute;left:429px;top:74px;width:1px;height:18px;background:#d9d9d9"></div>
<div class="t" style="left:441px;top:78.27px;font-size:11.5px;line-height:11.5px;color:#181818;font-weight:normal;letter-spacing:0.15px;-webkit-text-stroke:0.2px #181818;">Fecha de modificación</div>
<div style="position:absolute;left:610px;top:74px;width:1px;height:18px;background:#d9d9d9"></div>
<div class="t" style="right:160px;top:78.27px;font-size:11.5px;line-height:11.5px;color:#181818;font-weight:normal;letter-spacing:0.15px;-webkit-text-stroke:0.2px #181818;">Tamaño</div>
<div style="position:absolute;left:707px;top:74px;width:1px;height:18px;background:#d9d9d9"></div>
<div class="t" style="left:719px;top:78.27px;font-size:11.5px;line-height:11.5px;color:#181818;font-weight:normal;letter-spacing:0.15px;-webkit-text-stroke:0.2px #181818;">Clase</div>


<div class="tl" style="left:28px;top:22px;background:#fc5753;border-color:#df4744"></div>
<div class="tl" style="left:48px;top:22px;background:#fdbc40;border-color:#de9f34"></div>
<div class="tl" style="left:68px;top:22px;background:#0bc947;border-color:#0aa83a"></div>
<svg class="ic" style="left:371px;top:21px" width="16" height="14" viewBox="0 0 16 14">
 <path d="M0.5 1.3 Q0.5 0.5 1.3 0.5 H6 L7.1 1.9 H14.8 Q15.5 1.9 15.5 2.6 V12.8 Q15.5 13.5 14.8 13.5 H1.2 Q0.5 13.5 0.5 12.8 Z" fill="#5ecbf4" stroke="#47afdd" stroke-width="0.9"/>
 <line x1="1.3" x2="6" y1="1.4" y2="1.4" stroke="#a0e2f9" stroke-width="0.8"/>
 <line x1="1.2" x2="14.8" y1="12.3" y2="12.3" stroke="#8fdaf7" stroke-width="0.9"/>
</svg>
<div class="t" style="left:391px;top:21.74px;font-size:13.3px;line-height:13.3px;color:#4a4a4a;font-weight:normal;letter-spacing:0.15px;">Facultad-FIC</div>
<div class="btn" style="left:27px;top:41px;width:27px;height:24px"></div>
<div class="btn" style="left:54px;top:41px;width:26px;height:24px"></div>
<svg class="ic" style="left:28px;top:42px" width="51" height="22" viewBox="0 0 51 22">
 <path d="M14.5 5 L8.5 11 L14.5 17" fill="none" stroke="#6a6a6a" stroke-width="1.4"/>
 <path d="M36.5 5 L42.5 11 L36.5 17" fill="none" stroke="#b8b8b8" stroke-width="1.4"/>
</svg>
<div class="btn" style="left:209px;top:41px;width:110px;height:24px"></div>
<div class="seg" style="left:237px;top:41px;width:28px;height:24px;background:#6b6b6b;border-top:1px solid #5a5a5a;border-bottom:1px solid #4a4a4a"></div>
<div style="position:absolute;left:265px;top:43px;width:1px;height:21px;background:#d4d4d4"></div>
<div style="position:absolute;left:291px;top:43px;width:1px;height:21px;background:#d4d4d4"></div>
<svg class="ic" style="left:209px;top:42px" width="110" height="22" viewBox="0 0 110 22">
 <g fill="none" stroke="#707070" stroke-width="1.1">
  <rect x="9.5" y="6.5" width="3.5" height="3.5" rx="0.6"/><rect x="15.5" y="6.5" width="3.5" height="3.5" rx="0.6"/>
  <rect x="9.5" y="12.5" width="3.5" height="3.5" rx="0.6"/><rect x="15.5" y="12.5" width="3.5" height="3.5" rx="0.6"/>
 </g>
 <g stroke="#fff" stroke-width="1.1"><line x1="35" x2="49" y1="6.2" y2="6.2"/><line x1="35" x2="49" y1="8.6" y2="8.6"/><line x1="35" x2="49" y1="11" y2="11"/><line x1="35" x2="49" y1="13.4" y2="13.4"/><line x1="35" x2="49" y1="15.8" y2="15.8"/></g>
 <g fill="none" stroke="#6e6e6e" stroke-width="1.2">
  <rect x="61.6" y="6.6" width="15" height="9.2" rx="0.8"/><line x1="66.6" x2="66.6" y1="6.6" y2="15.8"/><line x1="71.6" x2="71.6" y1="6.6" y2="15.8"/>
 </g>
 <g fill="none" stroke="#6e6e6e" stroke-width="1.1">
  <line x1="88.3" x2="88.3" y1="5.6" y2="16.4"/>
  <path d="M90.6 6.5 V15.2"/>
  <rect x="93.6" y="6.4" width="7.2" height="8" rx="0.8" stroke-width="1.2"/>
  <path d="M103 6.5 V15.2"/>
  <line x1="105.5" x2="105.5" y1="5.6" y2="16.4"/>
 </g>
</svg>
<div class="btn" style="left:329px;top:41px;width:39px;height:24px"></div>
<svg class="ic" style="left:329px;top:42px" width="38" height="22" viewBox="0 0 38 22">
 <g fill="none" stroke="#6e6e6e" stroke-width="1.05">
  <rect x="6.5" y="7.5" width="3" height="3" rx="0.5"/><rect x="11.7" y="7.5" width="3" height="3" rx="0.5"/><rect x="16.9" y="7.5" width="3" height="3" rx="0.5"/>
  <rect x="6.5" y="14.5" width="3" height="3" rx="0.5"/><rect x="11.7" y="14.5" width="3" height="3" rx="0.5"/><rect x="16.9" y="14.5" width="3" height="3" rx="0.5"/>
 </g>
 <line x1="5.9" x2="20.3" y1="5.2" y2="5.2" stroke="#6e6e6e" stroke-width="1.1"/>
 <line x1="5.9" x2="20.3" y1="12.2" y2="12.2" stroke="#6e6e6e" stroke-width="1.1"/>
 <path d="M26.2 9 L29.6 12.4 L33 9" fill="none" stroke="#555" stroke-width="1.5"/>
</svg>
<div class="btn" style="left:375px;top:41px;width:39px;height:24px"></div>
<svg class="ic" style="left:375px;top:42px" width="38" height="22" viewBox="0 0 38 22">
 <g transform="translate(13,10.8)">
  <circle r="4.9" fill="#6a6a6a"/>
  <g fill="#6a6a6a">
   <rect x="-1.5" y="-7" width="3" height="14" rx="0.4"/>
   <rect x="-1.5" y="-7" width="3" height="14" rx="0.4" transform="rotate(45)"/>
   <rect x="-1.5" y="-7" width="3" height="14" rx="0.4" transform="rotate(90)"/>
   <rect x="-1.5" y="-7" width="3" height="14" rx="0.4" transform="rotate(135)"/>
  </g>
  <circle r="1.8" fill="#f6f6f6"/>
 </g>
 <path d="M26.3 9 L29.7 12.4 L33.1 9" fill="none" stroke="#555" stroke-width="1.5"/>
</svg>
<div class="btn" style="left:421px;top:41px;width:39px;height:24px"></div>
<svg class="ic" style="left:421px;top:42px" width="38" height="22" viewBox="0 0 38 22">
 <g fill="none" stroke="#6a6a6a" stroke-width="1.2">
  <path d="M16.8 9 H14.6 V17.6 H24.4 V9 H22.2"/>
  <path d="M19.5 12.8 V3.8"/><path d="M16.4 6.6 L19.5 3.5 L22.6 6.6"/>
 </g>
</svg>
<div class="btn" style="left:467px;top:41px;width:39px;height:24px"></div>
<svg class="ic" style="left:467px;top:42px" width="38" height="22" viewBox="0 0 38 22">
 <path d="M11.2 10.8 L15.4 6.6 H26.2 Q27.3 6.6 27.3 7.7 V13.9 Q27.3 15 26.2 15 H15.4 Z" fill="none" stroke="#6a6a6a" stroke-width="1.2" stroke-linejoin="round"/>
 <circle cx="15" cy="10.8" r="0.9" fill="#6a6a6a"/>
</svg>
<div class="btn" style="left:585px;top:41px;width:231px;height:24px"></div>
<svg class="ic" style="left:659px;top:45px" width="16" height="16" viewBox="0 0 16 16">
 <circle cx="6.5" cy="6.5" r="4.6" fill="none" stroke="#6e6e6e" stroke-width="1.1"/>
 <path d="M9.8 9.8 L13.8 13.8" stroke="#6e6e6e" stroke-width="1.2"/>
</svg>
<div class="t" style="left:679.5px;top:47.00px;font-size:13px;line-height:13px;color:#a3a3a3;font-weight:normal;letter-spacing:0.15px;">Buscar</div>

</div>
</body></html>
